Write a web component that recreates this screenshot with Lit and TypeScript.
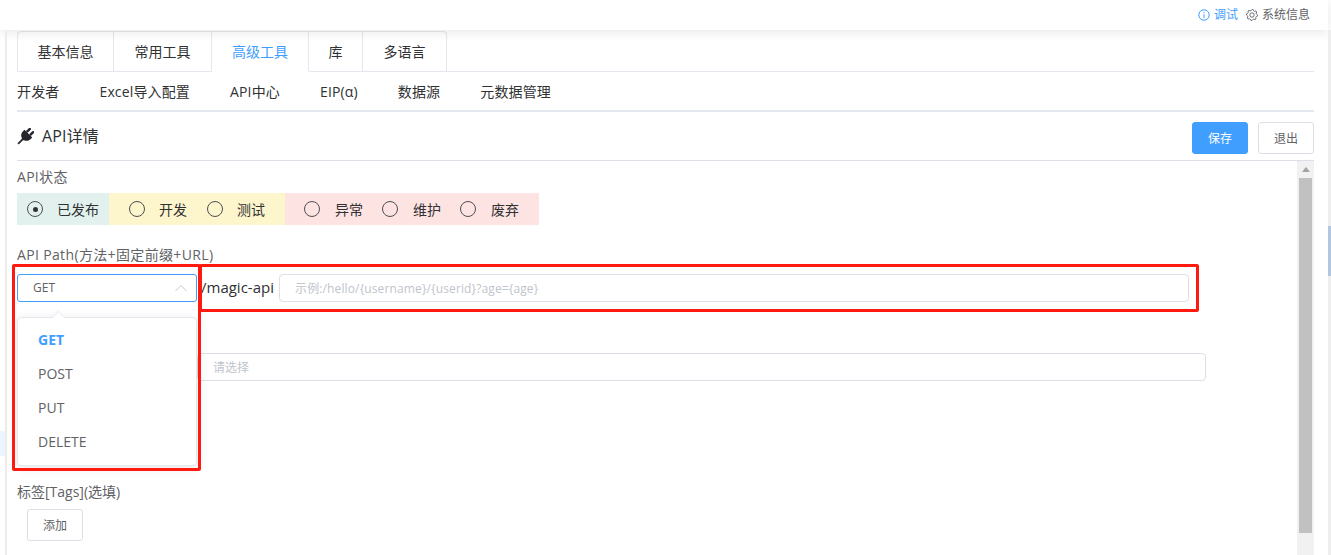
import { LitElement, html, css } from "lit";
import { customElement } from "lit/decorators.js";

const tabs = ["基本信息", "常用工具", "高级工具", "库", "多语言"];
const tabWidths = [97, 98, 97, 54, 84];
const subs = ["开发者", "Excel导入配置", "API中心", "EIP(α)", "数据源", "元数据管理"];

function gearPath(): string {
  const pts: string[] = [];
  const teeth = 8;
  for (let i = 0; i < teeth * 4; i++) {
    const a = (i / (teeth * 4)) * Math.PI * 2;
    const r = i % 4 < 2 ? 5.6 : 4.5;
    pts.push(`${(6 + r * Math.cos(a)).toFixed(2)} ${(6 + r * Math.sin(a)).toFixed(2)}`);
  }
  return "M" + pts.join("L") + "Z";
}

@customElement("app-root")
export class AppRoot extends LitElement {
  static styles = css`
    :host {
      display: block;
      width: 1331px;
      height: 555px;
      overflow: hidden;
      position: relative;
      background: #fff;
      font-family: "Open Sans", "Noto Sans CJK SC", sans-serif;
      color: #303133;
    }
    .topbar {
      height: 30px;
      width: 1328px;
      box-shadow: 0 2px 12px rgba(0, 0, 0, 0.1);
      display: flex;
      align-items: center;
      justify-content: flex-end;
      padding-right: 18px;
      box-sizing: border-box;
      font-size: 12px;
      gap: 8px;
      background: #fff;
      position: relative;
    }
    .topitem {
      display: flex;
      align-items: center;
      gap: 4px;
      color: #606266;
      line-height: 30px;
    }
    .topitem.blue {
      color: #409eff;
    }
    .frame {
      display: flex;
      height: 525px;
    }
    .leftstrip {
      width: 5px;
      border-right: 2px solid #ececec;
      flex: none;
      position: relative;
    }
    .leftstrip i {
      position: absolute;
      left: 0;
      top: 401px;
      width: 5px;
      height: 25px;
      background: #ecf5ff;
    }
    .main {
      width: 1297px;
      margin-left: 10px;
      flex: none;
    }
    .tabs {
      display: flex;
      height: 41px;
      border-bottom: 1px solid #e4e7ed;
    }
    .tab {
      font-size: 14px;
      height: 41px;
      margin-top: 1px;
      line-height: 39px;
      box-sizing: border-box;
      border: 1px solid #e4e7ed;
      border-left: none;
      color: #303133;
      text-align: center;
    }
    .tab:first-child {
      border-left: 1px solid #e4e7ed;
      border-radius: 4px 0 0 0;
    }
    .tab:last-child {
      border-radius: 0 4px 0 0;
    }
    .tab.active {
      color: #409eff;
      border-bottom: 1px solid #fff;
      height: 41px;
    }
    .subs {
      display: flex;
      height: 38px;
      border-bottom: 2px solid #e4e7ed;
      align-items: center;
      font-size: 14px;
      gap: 40px;
      letter-spacing: 0.15px;
      color: #303133;
    }
    .head {
      height: 48px;
      display: flex;
      align-items: center;
      justify-content: space-between;
      border-bottom: 1px solid #dcdfe6;
    }
    .title {
      display: flex;
      align-items: center;
      gap: 8px;
      font-size: 16px;
      color: #303133;
    }
    .title span {
      padding-bottom: 2px;
      letter-spacing: 0.15px;
    }
    .actions {
      display: flex;
      gap: 10px;
      margin-top: 4px;
    }
    .btn {
      height: 32px;
      box-sizing: border-box;
      border: 1px solid #dcdfe6;
      border-radius: 3px;
      font-size: 12px;
      color: #606266;
      background: #fff;
      display: flex;
      align-items: center;
      justify-content: center;
      width: 56px;
    }
    .btn.primary {
      background: #409eff;
      border-color: #409eff;
      color: #fff;
    }
    .body {
      display: flex;
      height: 394px;
    }
    .form {
      width: 1280px;
      flex: none;
    }
    .label {
      font-size: 14px;
      color: #606266;
      line-height: 20px;
    }
    .l1 {
      padding-top: 6px;
      letter-spacing: 0.3px;
    }
    .radios {
      display: flex;
      margin-top: 6px;
      height: 32px;
      width: 522px;
      font-size: 14px;
      color: #303133;
    }
    .group {
      display: flex;
      align-items: center;
      height: 32px;
      box-sizing: border-box;
    }
    .g1 {
      background: #e3f1ee;
      width: 92px;
      padding-left: 10px;
      --radio-gap: 14px;
    }
    .g2 {
      background: #fdf5cc;
      width: 176px;
      padding-left: 20px;
      gap: 20px;
      --radio-gap: 14px;
    }
    .g3 {
      background: #fee3e3;
      width: 254px;
      padding-left: 19px;
      gap: 19px;
      --radio-gap: 15px;
    }
    .radio {
      display: flex;
      align-items: center;
      gap: var(--radio-gap);
    }
    .dot {
      width: 16px;
      height: 16px;
      border: 1px solid #4d4f55;
      border-radius: 50%;
      box-sizing: border-box;
      display: flex;
      align-items: center;
      justify-content: center;
      flex: none;
    }
    .dot i {
      width: 5px;
      height: 5px;
      border-radius: 50%;
      background: #303133;
    }
    .l2 {
      margin-top: 20px;
      letter-spacing: 0.35px;
    }
    .pathrow {
      display: flex;
      align-items: center;
      margin-top: 9px;
      height: 28px;
    }
    .select {
      width: 180px;
      height: 28px;
      box-sizing: border-box;
      border: 1px solid #409eff;
      border-radius: 3px;
      display: flex;
      align-items: center;
      justify-content: space-between;
      padding: 0 9px 1px 15px;
      font-size: 12px;
      color: #606266;
      flex: none;
    }
    .prefix {
      width: 82px;
      height: 28px;
      line-height: 26px;
      flex: none;
      box-sizing: border-box;
      padding-left: 4px;
      font-size: 15px;
      color: #303133;
      white-space: nowrap;
    }
    .input {
      height: 28px;
      box-sizing: border-box;
      border: 1px solid #dcdfe6;
      border-radius: 4px;
      font-size: 12px;
      color: #c0c4cc;
      display: flex;
      align-items: center;
      padding-left: 15px;
    }
    .pathinput {
      width: 910px;
      letter-spacing: 0.13px;
      padding-bottom: 1px;
    }
    .wideinput {
      margin-top: 51px;
      margin-left: 180px;
      width: 1009px;
    }
    .l3 {
      margin-top: 101px;
    }
    .addwrap {
      margin-top: 7px;
      padding-left: 10px;
    }
    .scrollbar {
      width: 17px;
      background: #f1f1f1;
      display: flex;
      flex-direction: column;
      align-items: center;
      height: 394px;
      flex: none;
    }
    .arrow {
      height: 17px;
      width: 100%;
      display: flex;
      align-items: center;
      justify-content: center;
    }
    .thumb {
      width: 13px;
      height: 355px;
      background: #c1c1c1;
    }
    .rightstrip {
      position: absolute;
      right: 0;
      top: 30px;
      bottom: 0;
      width: 3px;
      background: #eeeeee;
    }
    .rightstrip i {
      display: block;
      margin-top: 196px;
      height: 50px;
      background: #b3c6e0;
    }
    .popper {
      position: absolute;
      left: 17px;
      top: 317px;
      width: 180px;
      height: 149px;
      box-sizing: border-box;
      background: #fff;
      border: 1px solid #e4e7ed;
      border-radius: 4px;
      box-shadow: 0 2px 12px rgba(0, 0, 0, 0.1);
      padding: 5px 0;
      font-size: 14px;
      color: #606266;
    }
    .popper .caret {
      position: absolute;
      left: 35px;
      top: -6px;
      width: 10px;
      height: 10px;
      background: #fff;
      border-left: 1px solid #e4e7ed;
      border-top: 1px solid #e4e7ed;
      transform: rotate(45deg) scale(0.85);
    }
    .opt {
      height: 34px;
      line-height: 34px;
      padding-left: 20px;
    }
    .opt.sel {
      color: #409eff;
      font-weight: 700;
    }
    .redbox {
      position: absolute;
      box-sizing: border-box;
      border: 3px solid #ff1a10;
      border-radius: 2px;
      pointer-events: none;
    }
    .r1 {
      left: 12px;
      top: 264px;
      width: 189px;
      height: 207px;
    }
    .r2 {
      left: 199px;
      top: 264px;
      width: 1000px;
      height: 48px;
    }
  `;

  private radio(t: string, on = false) {
    return html`<span class="radio"><span class="dot">${on ? html`<i></i>` : ""}</span><span>${t}</span></span>`;
  }

  render() {
    return html`
      <div class="topbar">
        <span class="topitem blue">
          <svg width="12" height="12" viewBox="0 0 12 12" fill="none" stroke="#409eff" stroke-width="1">
            <circle cx="6" cy="6" r="5.2"></circle>
            <path d="M6 2.8v1.2M6 5.2v3.8"></path>
          </svg>
          调试
        </span>
        <span class="topitem">
          <svg width="12" height="12" viewBox="0 0 12 12" fill="none" stroke="#606266" stroke-width="0.9">
            <circle cx="6" cy="6" r="2.2"></circle>
            <path d="${gearPath()}"></path>
          </svg>
          系统信息
        </span>
      </div>
      <div class="frame">
        <div class="leftstrip"><i></i></div>
        <div class="main">
          <div class="tabs">
            ${tabs.map(
              (t, i) =>
                html`<div class="tab ${i === 2 ? "active" : ""}" style="width:${tabWidths[i]}px">${t}</div>`
            )}
          </div>
          <div class="subs">${subs.map((s) => html`<span>${s}</span>`)}</div>
          <div class="head">
            <div class="title">
              <svg width="17" height="17" viewBox="0 0 17 17" fill="#24262b">
                <g transform="rotate(45 8.5 8.5)">
                  <rect x="5" y="-1" width="2.4" height="5.6" rx="1"></rect>
                  <rect x="9.6" y="-1" width="2.4" height="5.6" rx="1"></rect>
                  <path d="M3 4.4H14V6.6C14 9.9 11.9 11.8 9.6 12.2V13H7.4V12.2C5.1 11.8 3 9.9 3 6.6Z"></path>
                  <rect x="7.6" y="12" width="1.8" height="7"></rect>
                </g>
              </svg>
              <span>API详情</span>
            </div>
            <div class="actions">
              <div class="btn primary">保存</div>
              <div class="btn">退出</div>
            </div>
          </div>
          <div class="body">
            <div class="form">
              <div class="label l1">API状态</div>
              <div class="radios">
                <div class="group g1">${this.radio("已发布", true)}</div>
                <div class="group g2">${this.radio("开发")}${this.radio("测试")}</div>
                <div class="group g3">${this.radio("异常")}${this.radio("维护")}${this.radio("废弃")}</div>
              </div>
              <div class="label l2">API Path(方法+固定前缀+URL)</div>
              <div class="pathrow">
                <div class="select">
                  <span>GET</span>
                  <svg width="12" height="8" viewBox="0 0 12 8" fill="none" stroke="#c0c4cc" stroke-width="1">
                    <path d="M0.5 7L6 1.5L11.5 7"></path>
                  </svg>
                </div>
                <div class="prefix">/magic-api</div>
                <div class="input pathinput">示例:/hello/{username}/{userid}?age={age}</div>
              </div>
              <div class="input wideinput">请选择</div>
              <div class="label l3">标签[Tags](选填)</div>
              <div class="addwrap"><div class="btn">添加</div></div>
            </div>
            <div class="scrollbar">
              <div class="arrow">
                <svg width="8" height="5" viewBox="0 0 8 5" fill="#a3a3a3"><path d="M4 0L8 5H0Z"></path></svg>
              </div>
              <div class="thumb"></div>
            </div>
          </div>
        </div>
      </div>
      <div class="rightstrip"><i></i></div>
      <div class="popper">
        <div class="caret"></div>
        <div class="opt sel">GET</div>
        <div class="opt">POST</div>
        <div class="opt">PUT</div>
        <div class="opt">DELETE</div>
      </div>
      <div class="redbox r1"></div>
      <div class="redbox r2"></div>
    `;
  }
}
